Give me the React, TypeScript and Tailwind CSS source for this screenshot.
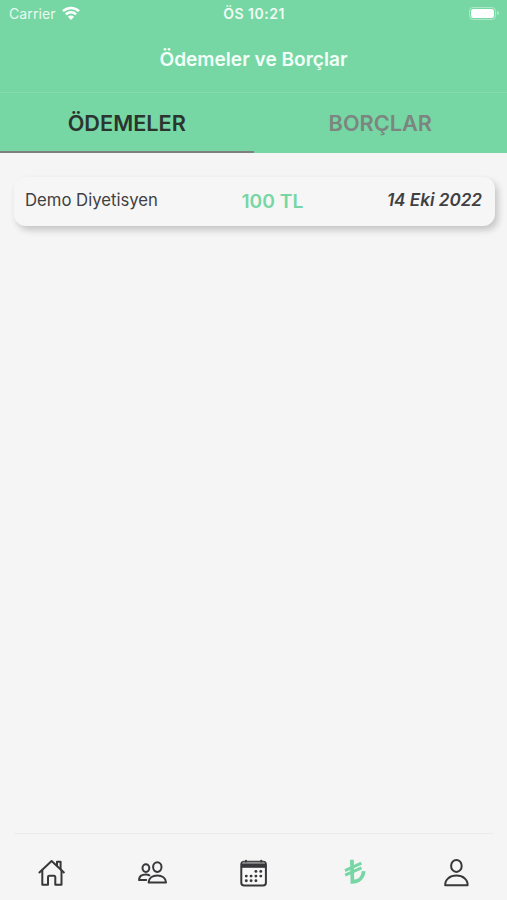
import { useState } from "react";

const payments = [{ id: 1, name: "Demo Diyetisyen", amount: "100 TL", date: "14 Eki 2022" }];

const iconProps = {
  viewBox: "0 0 32 32",
  className: "size-8",
  fill: "none",
  stroke: "currentColor",
  strokeWidth: 2,
  strokeLinecap: "round" as const,
  strokeLinejoin: "round" as const,
};

function HomeIcon() {
  return (
    <svg {...iconProps}>
      <path d="M4.4 15.4 16.6 4.1 28.9 15.4" />
      <path d="M7.3 13.2V27.7H13V20a1.2 1.2 0 0 1 1.2-1.2h4.9a1.2 1.2 0 0 1 1.2 1.2v7.7h6.2V13.2" />
      <path d="M22 8.6V4.8h3.6v7" />
    </svg>
  );
}

function PeopleIcon() {
  return (
    <svg {...iconProps}>
      <ellipse cx="21.3" cy="10.1" rx="4.2" ry="4.8" />
      <ellipse cx="9.9" cy="11.1" rx="3.4" ry="3.8" />
      <path d="M12.6 25.5c.2-4.4 4-7 8.7-7s8.5 2.6 8.7 7Z" />
      <path d="M10.2 23H3c.2-3.6 3.1-5.4 6.9-5.4 1.3 0 2.5.2 3.5.7" />
    </svg>
  );
}

function CalendarIcon() {
  return (
    <svg {...iconProps}>
      <rect x="4.3" y="4.7" width="24.6" height="23.8" rx="2.8" fill="#f8f8f8" />
      <path d="M5.5 4.8h22v2.3h-22z" fill="#8b8b8d" stroke="none" />
      <path d="M5 6.8h23.3v4H5z" fill="currentColor" stroke="none" />
      <path d="M9 3.8v.6M24.2 3.8v.6" />
      <g fill="currentColor" stroke="none">
        <circle cx="18.9" cy="14.4" r="1.45" />
        <circle cx="23.8" cy="14.4" r="1.45" />
        <circle cx="9.3" cy="19.1" r="1.45" />
        <circle cx="14.1" cy="19.1" r="1.45" />
        <circle cx="18.9" cy="19.1" r="1.45" />
        <circle cx="23.8" cy="19.1" r="1.45" />
        <circle cx="9.3" cy="23.8" r="1.45" />
        <circle cx="14.1" cy="23.8" r="1.45" />
        <circle cx="18.9" cy="23.8" r="1.45" />
      </g>
    </svg>
  );
}

function LiraIcon() {
  return (
    <svg {...iconProps} className="size-8 text-[#76d7a4]" strokeLinecap="butt" strokeLinejoin="miter">
      <path d="M12.9 2.8 13.4 24.8C19.8 24.8 24.2 20.6 24.6 14.2" strokeWidth="3.7" />
      <path d="M6 13.6 22.4 6.2M6.2 18.1 22.5 10.9" strokeWidth="3" />
    </svg>
  );
}

function PersonIcon() {
  return (
    <svg {...iconProps}>
      <ellipse cx="16.4" cy="8.9" rx="5.3" ry="6" />
      <path d="M5.2 28.3c-.3-6 4.8-9.8 11.2-9.8s11.5 3.8 11.2 9.8Z" />
    </svg>
  );
}

function StatusBar() {
  return (
    <div className="grid h-7 grid-cols-3 items-center pl-[9px] pr-2 text-white">
      <div className="flex items-center gap-[6px] text-[14px] tracking-[0.1px]">
        <span className="-mt-px opacity-85">Carrier</span>
        <svg viewBox="0 0 18 14" className="-mt-[2px] h-[14px] w-[18px]" fill="none">
          <path d="M1 5.2a11.4 11.4 0 0 1 16 0" stroke="currentColor" strokeWidth="2.5" />
          <path d="M3.9 8.4a7.2 7.2 0 0 1 10.2 0" stroke="currentColor" strokeWidth="2.5" />
          <path d="M9 13.9 5.9 10.8a4.4 4.4 0 0 1 6.2 0Z" fill="currentColor" />
        </svg>
      </div>
      <div className="-mt-[2px] text-center text-[14px] font-semibold tracking-[0.5px] opacity-90">ÖS 10:21</div>
      <div className="-mt-[2px] flex items-center justify-end gap-[1px]">
        <div className="h-[13px] w-[27px] rounded-[4px] border border-white/40 p-[1px]">
          <div className="h-full rounded-[2.5px] bg-white" />
        </div>
        <div className="h-1 w-[2px] rounded-r bg-white/40" />
      </div>
    </div>
  );
}

function Tabs({ active, onChange }: { active: string; onChange: (tab: string) => void }) {
  return (
    <div className="grid h-[61px] grid-cols-2 border-t border-[#86dcae]">
      {["ÖDEMELER", "BORÇLAR"].map((tab) => (
        <button
          key={tab}
          onClick={() => onChange(tab)}
          className={`border-b-2 pt-[2px] text-[21.7px] font-semibold ${
            active === tab ? "border-[#7f7f7f] text-[#2b342e]" : "border-transparent text-[#7c857f]"
          }`}
        >
          {tab}
        </button>
      ))}
    </div>
  );
}

function BottomNav() {
  return (
    <nav className="h-[67px]">
      <div className="mx-[14px] h-px bg-[#ebebeb]" />
      <div className="grid grid-cols-5 justify-items-center pt-[23px] text-[#38383b]">
        <HomeIcon />
        <PeopleIcon />
        <CalendarIcon />
        <LiraIcon />
        <PersonIcon />
      </div>
    </nav>
  );
}

export default function App() {
  const [tab, setTab] = useState("ÖDEMELER");

  return (
    <div className="flex h-[900px] w-[507px] flex-col overflow-hidden bg-[#f5f5f5] font-['Inter',sans-serif]">
      <header className="bg-[#76d7a4]">
        <StatusBar />
        <h1 className="flex h-16 items-center justify-center pb-[2px] text-[19.1px] font-semibold text-[#f3fff8]">
          Ödemeler ve Borçlar
        </h1>
        <Tabs active={tab} onChange={setTab} />
      </header>
      <main className="flex-1 pl-[14px] pr-3 pt-6">
        {tab === "ÖDEMELER" &&
          payments.map((payment) => (
            <div
              key={payment.id}
              className="flex h-[49px] items-center justify-between rounded-[12px] bg-[#f6f6f6] pl-[11px] pr-[13px] text-[#404042] shadow-[3px_4px_7px_rgba(0,0,0,0.2)]"
            >
              <span className="-mt-[2px] text-[16.7px]">{payment.name}</span>
              <span className="text-[19.2px] font-semibold text-[#76d7a4]">{payment.amount}</span>
              <span className="-mt-[3px] text-[17.1px] font-semibold italic">{payment.date}</span>
            </div>
          ))}
      </main>
      <BottomNav />
    </div>
  );
}
